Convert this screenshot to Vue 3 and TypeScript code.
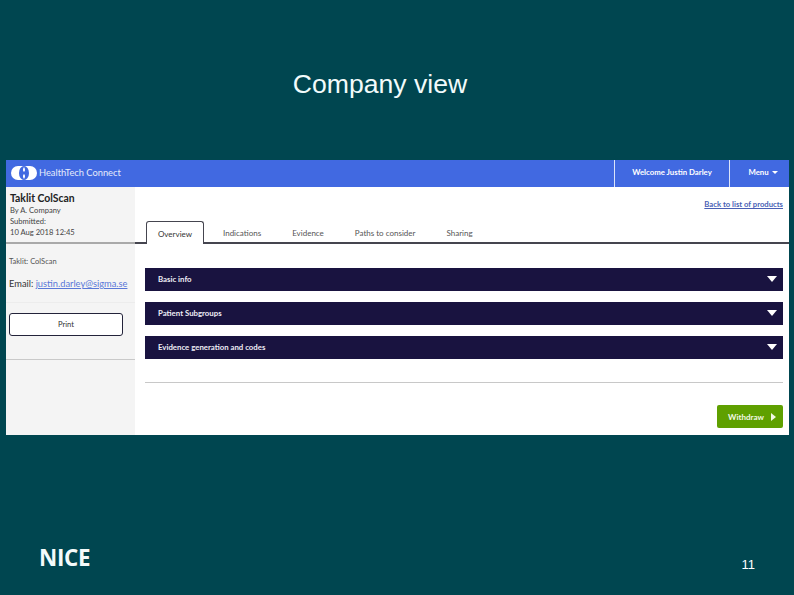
<script setup lang="ts">
const tabs = ['Overview', 'Indications', 'Evidence', 'Paths to consider', 'Sharing'];
const sections = ['Basic info', 'Patient Subgroups', 'Evidence generation and codes'];
</script>

<template>
  <div class="slide">
    <h1 class="slide-title">Company view</h1>

    <div class="shot">
      <header class="topbar">
        <div class="brand">
          <svg class="logo" width="26" height="14" viewBox="0 0 26 14">
            <rect x="0" y="0" width="26" height="14" rx="7" fill="#fff" />
            <ellipse cx="13" cy="7" rx="5" ry="7" fill="#4169e1" />
            <path d="M13 1 C14.4 3 14.4 5 13 6 C11.6 5 11.6 3 13 1 Z M13 13 C14.4 11 14.4 9 13 8 C11.6 9 11.6 11 13 13 Z" fill="#fff" />
          </svg>
          <span class="brand-name">HealthTech Connect</span>
        </div>
        <div class="top-cell welcome">Welcome Justin Darley</div>
        <div class="top-cell menu">Menu <i class="menu-caret"></i></div>
      </header>

      <div class="body">
        <aside class="side">
          <div class="side-head">
            <div class="product">Taklit ColScan</div>
            <div class="meta">By A. Company</div>
            <div class="meta">Submitted:</div>
            <div class="meta">10 Aug 2018 12:45</div>
          </div>
          <div class="side-info">
            <div class="side-name">Taklit: ColScan</div>
            <div class="email">Email: <a class="email-link">justin.darley@sigma.se</a></div>
          </div>
          <div class="side-actions">
            <button class="print">Print</button>
          </div>
        </aside>

        <main class="main">
          <div class="back-row"><a class="back">Back to list of products</a></div>
          <nav class="tabs">
            <span v-for="(tab, i) in tabs" :key="tab" :class="['tab', i === 0 ? 'active' : '']">{{ tab }}</span>
          </nav>
          <div class="content">
            <div v-for="s in sections" :key="s" class="section">
              <span>{{ s }}</span>
              <i class="section-caret"></i>
            </div>
            <hr class="rule" />
            <div class="actions">
              <button class="withdraw">Withdraw <i class="withdraw-arrow"></i></button>
            </div>
          </div>
        </main>
      </div>
    </div>

    <footer class="foot">
      <span class="nice">NICE</span>
      <span class="page-no">11</span>
    </footer>
  </div>
</template>

<style scoped>
.slide {
  width: 794px;
  height: 595px;
  background: #004650;
  display: flex;
  flex-direction: column;
  overflow: hidden;
  font-family: Lato, "Liberation Sans", sans-serif;
}

.slide-title {
  margin: 0;
  height: 160px;
  padding: 70px 34px 0 0;
  box-sizing: border-box;
  text-align: center;
  font: 400 26.6px/28px "Liberation Sans", Arial, sans-serif;
  color: #f2fbfb;
}

.shot {
  width: 783px;
  height: 275px;
  margin-left: 6px;
  background: #fff;
  display: flex;
  flex-direction: column;
}

.topbar {
  height: 27px;
  background: #4169e1;
  display: flex;
  align-items: stretch;
  color: #fff;
  flex: none;
}
.brand {
  flex: 1;
  display: flex;
  align-items: center;
  gap: 2px;
  padding: 0 0 2px 5px;
}
.brand-name { font-size: 9.3px; color: #e6ecfb; }
.top-cell {
  display: flex;
  align-items: center;
  justify-content: center;
  box-sizing: border-box;
  padding-bottom: 3px;
  font-size: 7.8px;
  font-weight: 700;
  border-left: 1px solid #dbe4fa;
}
.welcome { width: 115px; }
.menu { width: 60px; gap: 3px; padding-left: 7px; }
.menu-caret {
  width: 0;
  height: 0;
  border-left: 3px solid transparent;
  border-right: 3px solid transparent;
  border-top: 3px solid #fff;
}

.body { flex: 1; display: flex; min-height: 0; }

.side {
  width: 129px;
  flex: none;
  background: #f4f4f4;
  color: #333;
}
.side-head {
  height: 57px;
  box-sizing: border-box;
  padding: 4px 0 0 4px;
  border-bottom: 2px solid #a9a9a9;
}
.product { font-size: 10.4px; line-height: 14px; font-weight: 700; color: #222; }
.meta { font-size: 7.6px; line-height: 11px; color: #444; }
.side-info {
  height: 59px;
  box-sizing: border-box;
  padding: 12px 0 0 3px;
  border-bottom: 1px solid #ececec;
}
.side-name { font-size: 7.5px; line-height: 11px; color: #555; }
.email { margin-top: 10px; font-size: 9.3px; line-height: 14px; color: #333; white-space: nowrap; }
.email-link { color: #5a78d8; text-decoration: underline; }
.side-actions {
  height: 57px;
  box-sizing: border-box;
  padding: 8px 12px 0 3px;
  border-bottom: 1px solid #c9c9c9;
}
.print {
  width: 114px;
  height: 23px;
  padding: 0;
  background: #fff;
  border: 1px solid #23233a;
  border-radius: 3px;
  font: 400 7.6px Lato, sans-serif;
  color: #333;
}

.main { flex: 1; display: flex; flex-direction: column; min-width: 0; }
.back-row {
  height: 34px;
  flex: none;
  box-sizing: border-box;
  padding: 8px 6px 0 0;
  text-align: right;
  line-height: 11px;
}
.back { font-size: 7.7px; font-weight: 700; color: #4a5fb5; text-decoration: underline; }

.tabs {
  height: 23px;
  flex: none;
  box-sizing: border-box;
  display: flex;
  padding-left: 11px;
  border-bottom: 2px solid #45454f;
}
.tab {
  height: 23px;
  box-sizing: border-box;
  padding: 7px 0 0;
  margin-right: 31px;
  font-size: 8px;
  line-height: 11px;
  color: #555;
  white-space: nowrap;
}
.tab.active {
  width: 58px;
  margin-right: 19px;
  text-align: center;
  background: #fff;
  color: #333;
  border: 1px solid #45454f;
  border-bottom: none;
  border-radius: 3px 3px 0 0;
}

.content {
  flex: 1;
  display: flex;
  flex-direction: column;
  padding: 24px 6px 0 10px;
}
.section {
  height: 23px;
  flex: none;
  box-sizing: border-box;
  margin-bottom: 11px;
  padding: 0 6px 1px 13px;
  display: flex;
  align-items: center;
  justify-content: space-between;
  background: #191340;
  color: #eeeef6;
  font-size: 7.8px;
  font-weight: 700;
}
.section-caret {
  width: 0;
  height: 0;
  border-left: 5.5px solid transparent;
  border-right: 5.5px solid transparent;
  border-top: 6px solid #fff;
}
.rule {
  width: 100%;
  margin: 12px 0 0;
  border: none;
  border-top: 1px solid #c8c8c8;
}
.actions { display: flex; justify-content: flex-end; margin-top: 22px; }
.withdraw {
  width: 66px;
  height: 23px;
  padding: 0 0 0 4px;
  display: flex;
  align-items: center;
  justify-content: center;
  gap: 7px;
  background: #5fa000;
  border: none;
  border-radius: 2px;
  color: #f2f8e6;
  font: 700 8px Lato, sans-serif;
}
.withdraw-arrow {
  width: 0;
  height: 0;
  border-top: 4px solid transparent;
  border-bottom: 4px solid transparent;
  border-left: 5px solid #f2f8e6;
}

.foot {
  flex: 1;
  display: flex;
  align-items: flex-start;
  justify-content: space-between;
  padding: 109px 39px 0 39px;
  color: #fff;
}
.nice {
  font: 700 22.4px/28px "Open Sans", "Liberation Sans", sans-serif;
  letter-spacing: -0.3px;
  color: #f4fbfb;
}
.page-no { font: 400 13px/15px "Liberation Sans", Arial, sans-serif; margin-top: 13px; }
</style>
